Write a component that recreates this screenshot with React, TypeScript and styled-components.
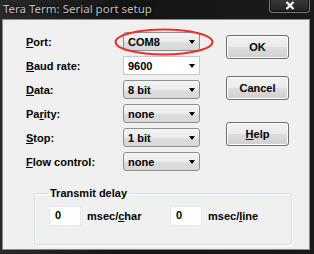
import React, { FC } from 'react';
import styled, { createGlobalStyle } from 'styled-components';

const GlobalStyle = createGlobalStyle`
  html, body {
    margin: 0;
    padding: 0;
    background: #1c1c1c;
  }
  #root {
    width: 314px;
    height: 254px;
  }
`;

interface ComboProps {
  value: string;
  editable?: boolean;
}

const Combo: FC<ComboProps> = ({ value, editable }: ComboProps): JSX.Element => {
  return (
    <ComboBox $editable={editable}>
      <span>{value}</span>
      <Arrow />
    </ComboBox>
  );
};

// label text with the mnemonic letter underlined
const Mn: FC<{ text: string; at: number }> = ({ text, at }) => (
  <>
    {text.slice(0, at)}
    <u>{text[at]}</u>
    {text.slice(at + 1)}
  </>
);

const rows: { label: string; at: number; value: string; editable?: boolean }[] = [
  { label: 'Port:', at: 0, value: 'COM8' },
  { label: 'Baud rate:', at: 0, value: '9600', editable: true },
  { label: 'Data:', at: 0, value: '8 bit' },
  { label: 'Parity:', at: 2, value: 'none' },
  { label: 'Stop:', at: 0, value: '1 bit' },
  { label: 'Flow control:', at: 0, value: 'none' },
];

const App: FC = (): JSX.Element => {
  return (
    <Frame>
      <GlobalStyle />
      <TitleBar>
        <Caption>Tera Term: Serial port setup</Caption>
        <CloseBtn>
          <svg width="10" height="9" viewBox="0 0 10 9">
            <path d="M1.5 1 L8.5 8 M8.5 1 L1.5 8" stroke="#fff" strokeWidth="2.2" />
          </svg>
        </CloseBtn>
      </TitleBar>
      <Client>
        <Top>
          <Form>
            {rows.map((r) => (
              <FieldRow key={r.label}>
                <Label>
                  <Mn text={r.label} at={r.at} />
                </Label>
                <Combo value={r.value} editable={r.editable} />
              </FieldRow>
            ))}
          </Form>
          <Buttons>
            <Button>OK</Button>
            <Button $gap={17}>Cancel</Button>
            <Button $gap={22}>
              <Mn text="Help" at={0} />
            </Button>
          </Buttons>
        </Top>
        <Group>
          <Legend>Transmit delay</Legend>
          <DelayRow>
            <NumInput>0</NumInput>
            <Unit>
              msec/<u>c</u>har
            </Unit>
            <NumInput>0</NumInput>
            <Unit>
              msec/<u>l</u>ine
            </Unit>
          </DelayRow>
        </Group>
        <Highlight viewBox="0 0 102 30" width="102" height="30">
          <ellipse cx="51" cy="15" rx="48.5" ry="12.5" fill="none" stroke="#e8322e" strokeWidth="2" />
        </Highlight>
      </Client>
    </Frame>
  );
};

const Frame = styled.div`
  width: 314px;
  height: 254px;
  display: flex;
  flex-direction: column;
  background: linear-gradient(90deg, #2a2a2a, #151515 40%, #1a1a1a);
  box-sizing: border-box;
`;

const TitleBar = styled.div`
  height: 19px;
  display: flex;
  align-items: flex-start;
  justify-content: space-between;
  padding-left: 3px;
  padding-right: 4px;
`;

const Caption = styled.div`
  font-family: 'Noto Sans', 'DejaVu Sans', sans-serif;
  font-size: 11.5px;
  line-height: 18px;
  color: #bdbdbd;
  text-shadow: 0 0 4px #000;
`;

const CloseBtn = styled.div`
  width: 39px;
  height: 13px;
  margin-top: -1px;
  border: 1px solid #777;
  border-top: none;
  border-radius: 0 0 4px 4px;
  background: linear-gradient(#3a3a3a, #222);
  box-shadow: inset 0 0 0 1px #111;
  display: flex;
  align-items: center;
  justify-content: center;
`;

const Client = styled.div`
  position: relative;
  flex: 1;
  margin: 0 4px 4px 2px;
  background: #f0f0f0;
  border: 1px solid #8a8a8a;
  padding: 12px 0 0 23px;
  font-family: 'Liberation Sans', Arial, sans-serif;
  font-size: 11px;
  font-weight: bold;
  color: #000;
`;

const Top = styled.div`
  display: flex;
`;

const Form = styled.div`
  display: flex;
  flex-direction: column;
  gap: 5px;
`;

const FieldRow = styled.div`
  display: flex;
  align-items: center;
  height: 19px;
`;

const Label = styled.div`
  width: 97px;
  padding-top: 1px;
`;

const ComboBox = styled.div<{ $editable?: boolean }>`
  box-sizing: border-box;
  width: 77px;
  height: 19px;
  display: flex;
  align-items: center;
  justify-content: space-between;
  padding: 0 4px 0 4px;
  border: 1px solid ${(p) => (p.$editable ? '#c5c9cf' : '#8e8f8f')};
  border-radius: ${(p) => (p.$editable ? '0' : '3px')};
  background: ${(p) =>
    p.$editable ? '#fff' : 'linear-gradient(#f4f4f4 0%, #ebebeb 50%, #dddddd 51%, #d6d6d6 100%)'};
`;

const Arrow = styled.div`
  width: 0;
  height: 0;
  border-left: 3.5px solid transparent;
  border-right: 3.5px solid transparent;
  border-top: 4px solid #000;
  margin-top: 1px;
`;

const Buttons = styled.div`
  display: flex;
  flex-direction: column;
  margin-left: 26px;
  padding-top: 3px;
`;

const Button = styled.div<{ $gap?: number }>`
  box-sizing: border-box;
  width: 63px;
  height: 24px;
  margin-top: ${(p) => p.$gap ?? 0}px;
  border: 1px solid #707070;
  border-radius: 3px;
  background: linear-gradient(#f2f2f2 0%, #ebebeb 50%, #dddddd 51%, #cfcfcf 100%);
  box-shadow: inset 0 0 0 1px #fcfcfc;
  display: flex;
  align-items: center;
  justify-content: center;
`;

const Group = styled.fieldset`
  box-sizing: border-box;
  width: 245px;
  height: 58px;
  margin: 16px 0 0 8px;
  padding: 6px 0 0 14px;
  border: 1px solid #d5dfe5;
  border-radius: 3px;
  box-shadow: 1px 1px 0 #fff, inset 1px 1px 0 #fff;
`;

const Legend = styled.legend`
  padding: 0 2px;
  margin-left: -1px;
  font-size: 11px;
  line-height: 13px;
`;

const DelayRow = styled.div`
  display: flex;
  align-items: center;
`;

const NumInput = styled.div`
  box-sizing: border-box;
  width: 32px;
  height: 20px;
  background: #fff;
  border: 1px solid #e3e9ef;
  padding: 2px 0 0 5px;
`;

const Unit = styled.div`
  width: 83px;
  padding-left: 6px;
`;

const Highlight = styled.svg`
  position: absolute;
  left: 110px;
  top: 7px;
  pointer-events: none;
`;

export default App;
